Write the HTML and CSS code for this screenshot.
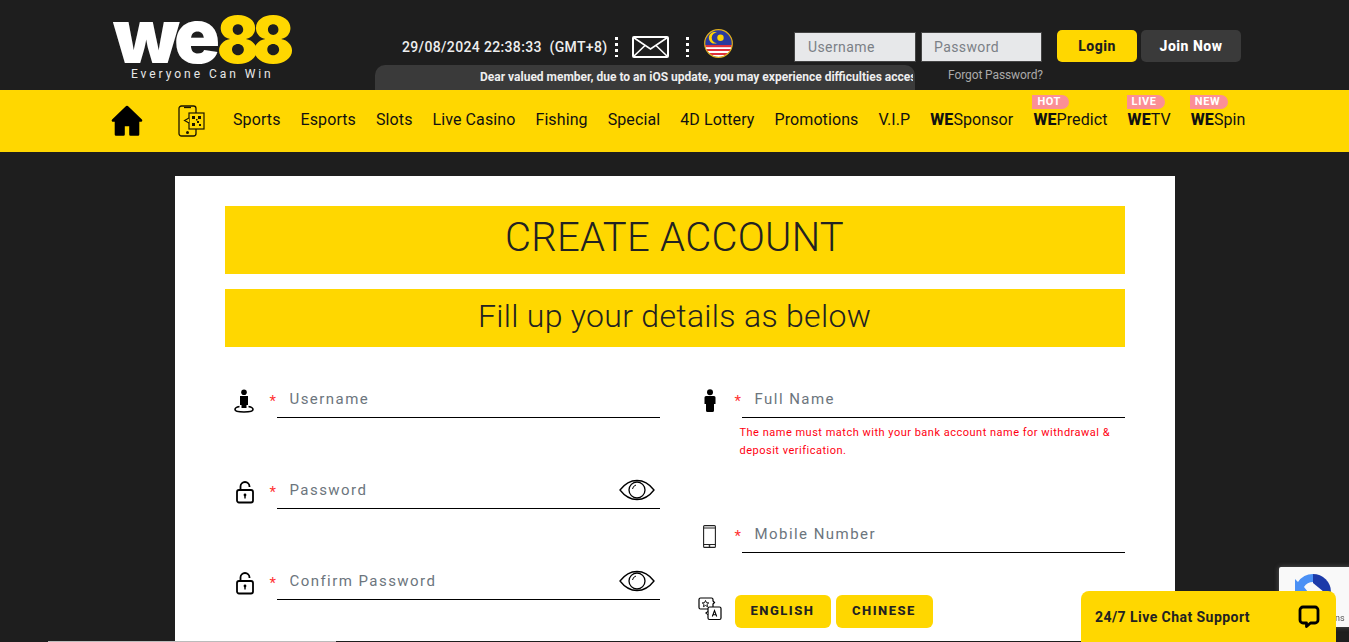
FILE: index.html
```html
<!DOCTYPE html>
<html lang="en">
<head>
<meta charset="utf-8">
<title>WE88 - Create Account</title>
<link rel="stylesheet" href="styles.css">
</head>
<body>
<div class="page">
  <header class="top">
    <a class="logo" href="#">
      <span class="logo-mark"><span class="logo-we">we</span><span class="logo-88">88</span></span>
      <span class="logo-tag">Everyone Can Win</span>
    </a>
    <div class="status">
      <span class="clock">29/08/2024 22:38:33&nbsp; (GMT+8)</span>
      <span class="dots"></span>
      <svg class="mail" viewBox="0 0 37 22" width="37" height="22"><rect x="1" y="1" width="35" height="20" rx="1" fill="none" stroke="#fff" stroke-width="2"/><path d="M1.5 1.5 18.5 13 35.5 1.5M1.5 20.5 13 9.5M35.5 20.5 24 9.5" fill="none" stroke="#fff" stroke-width="1.6"/></svg>
      <span class="dots dots-b"></span>
      <svg class="flag" viewBox="0 0 29 29" width="29" height="29"><defs><clipPath id="fc"><circle cx="14.5" cy="14.5" r="13.5"/></clipPath></defs><g clip-path="url(#fc)"><rect width="29" height="29" fill="#2a3a9e"/><rect y="16" width="29" height="13" fill="#fff"/><rect y="16" width="29" height="2.2" fill="#e0303a"/><rect y="20" width="29" height="2" fill="#e0303a"/><rect y="24" width="29" height="2" fill="#e0303a"/></g><circle cx="14.5" cy="14.5" r="13.8" fill="none" stroke="#e0b020" stroke-width="1.2"/><path d="M13 3.500a5.800 5.800 0 1 0 0 10.600a5 5 0 1 1 0-10.600z" fill="#ffd400"/><circle cx="16.500" cy="8.800" r="3.200" fill="#ffd400"/></svg>
    </div>
    <div class="auth">
      <input class="auth-input" type="text" placeholder="Username">
      <input class="auth-input auth-input-b" type="text" placeholder="Password">
      <button class="btn btn-login" type="button">Login</button>
      <button class="btn btn-join" type="button">Join Now</button>
    </div>
    <div class="notice"><span>Dear valued member, due to an iOS update, you may experience difficulties accessing our site</span></div>
    <a class="forgot" href="#">Forgot Password?</a>
  </header>

  <nav class="nav">
    <svg class="nav-home" viewBox="0 0 32 31" width="32" height="31"><path d="M16 2 2 15.500H5V29.500H12.500V20H19.500V29.500H27V15.500H30Z" fill="#000" stroke="#000" stroke-width="2.600" stroke-linejoin="round"/></svg>
    <svg class="nav-qr" viewBox="0 0 27 32" width="27" height="32"><rect x="1" y="1" width="17" height="30" rx="2.500" fill="none" stroke="#1a1400" stroke-width="1.300"/><path d="M6 2.500h7" stroke="#1a1400" stroke-width="1.300"/><circle cx="9.500" cy="27.500" r="1.500" fill="#1a1400"/><rect x="11" y="8" width="15" height="16" fill="#ffd700" stroke="#1a1400" stroke-width="1.200"/><path d="M11 13 6.500 15.500 11 18" fill="#ffd700" stroke="#1a1400" stroke-width="1.100"/><path d="M14 11h3v3h-3zM20 11h3v3h-3zM14 18h3v3h-3zM19 16h2v2h-2zM21 19h2v2h-2zM18 14h1.500v1.500h-1.500z" fill="#1a1400"/></svg>
    <ul class="nav-list">
      <li><a href="#">Sports</a></li>
      <li><a href="#">Esports</a></li>
      <li><a href="#">Slots</a></li>
      <li><a href="#">Live Casino</a></li>
      <li><a href="#">Fishing</a></li>
      <li><a href="#">Special</a></li>
      <li><a href="#">4D Lottery</a></li>
      <li><a href="#">Promotions</a></li>
      <li><a href="#">V.I.P</a></li>
      <li><a href="#"><b>WE</b>Sponsor</a></li>
      <li><a href="#"><b>WE</b>Predict</a><span class="tag">HOT</span></li>
      <li><a href="#"><b>WE</b>TV</a><span class="tag">LIVE</span></li>
      <li><a href="#"><b>WE</b>Spin</a><span class="tag">NEW</span></li>
    </ul>
  </nav>

  <main class="card">
    <h1 class="banner banner-lg">CREATE ACCOUNT</h1>
    <h2 class="banner banner-sm">Fill up your details as below</h2>
    <form class="form">
      <div class="col">
        <div class="field">
          <span class="f-icon"><svg viewBox="0 0 20 24" width="20" height="24"><circle cx="10" cy="3.200" r="2.800"/><path d="M6 7h8v9h-1.500v3h-5v-3H6z"/><path d="M5.500 17.500C2.500 18 1 19 1 20.500 1 22 5 23 10 23s9-1 9-2.500c0-1.500-1.500-2.500-4.500-3" fill="none" stroke="#000" stroke-width="1.600"/></svg></span>
          <span class="req">*</span>
          <span class="line"><input type="text" placeholder="Username"></span>
        </div>
        <div class="field">
          <span class="f-icon f-icon-lock"><svg viewBox="0 0 20 24" width="20" height="24"><path d="M5.500 10V6.500a4.500 4.500 0 0 1 9 0V7" fill="none" stroke="#000" stroke-width="1.800"/><rect x="2" y="10" width="16" height="12.500" rx="2" fill="none" stroke="#000" stroke-width="1.800"/><circle cx="10" cy="15" r="1.400"/><rect x="9.300" y="15" width="1.400" height="3.500"/></svg></span>
          <span class="req">*</span>
          <span class="line"><input type="password" placeholder="Password"><svg class="eye" viewBox="0 0 36 22" width="36" height="22"><path d="M1 11C6 4.500 12 1.500 18 1.500S30 4.500 35 11C30 17.500 24 20.500 18 20.500S6 17.500 1 11Z" fill="none" stroke="#000" stroke-width="1.300"/><circle cx="18" cy="11" r="8" fill="none" stroke="#000" stroke-width="1.300"/><path d="M13.500 10a5 5 0 0 1 3.500-4" fill="none" stroke="#000"/></svg></span>
        </div>
        <div class="field">
          <span class="f-icon f-icon-lock"><svg viewBox="0 0 20 24" width="20" height="24"><path d="M5.500 10V6.500a4.500 4.500 0 0 1 9 0V7" fill="none" stroke="#000" stroke-width="1.800"/><rect x="2" y="10" width="16" height="12.500" rx="2" fill="none" stroke="#000" stroke-width="1.800"/><circle cx="10" cy="15" r="1.400"/><rect x="9.300" y="15" width="1.400" height="3.500"/></svg></span>
          <span class="req">*</span>
          <span class="line"><input type="password" placeholder="Confirm Password"><svg class="eye" viewBox="0 0 36 22" width="36" height="22"><path d="M1 11C6 4.500 12 1.500 18 1.500S30 4.500 35 11C30 17.500 24 20.500 18 20.500S6 17.500 1 11Z" fill="none" stroke="#000" stroke-width="1.300"/><circle cx="18" cy="11" r="8" fill="none" stroke="#000" stroke-width="1.300"/><path d="M13.500 10a5 5 0 0 1 3.500-4" fill="none" stroke="#000"/></svg></span>
        </div>
      </div>
      <div class="col">
        <div class="field field-r">
          <span class="f-icon"><svg viewBox="0 0 12 24" width="12" height="24"><circle cx="6" cy="3.200" r="3"/><path d="M2 7h8a1.500 1.500 0 0 1 1.500 1.500V15H10v6.500a1.500 1.500 0 0 1-1.500 1.500h-5A1.500 1.500 0 0 1 2 21.500V15H.5V8.500A1.500 1.500 0 0 1 2 7z"/></svg></span>
          <span class="req">*</span>
          <span class="line"><input type="text" placeholder="Full Name"></span>
        </div>
        <p class="hint">The name must match with your bank account name for withdrawal &amp; deposit verification.</p>
        <div class="field field-r field-mobile">
          <span class="f-icon"><svg viewBox="0 0 13 23" width="13" height="23"><rect x=".6" y=".6" width="11.800" height="21.800" rx="1" fill="none" stroke="#222" stroke-width="1.100"/><path d="M.6 3h11.800M.6 19.500h11.800" stroke="#222" stroke-width="1"/><circle cx="6.500" cy="21" r=".9" fill="#222"/></svg></span>
          <span class="req">*</span>
          <span class="line"><input type="tel" placeholder="Mobile Number"></span>
        </div>
        <div class="lang">
          <svg class="lang-icon" viewBox="0 0 24 24" width="24" height="24"><path d="M2.500 1h11a1.500 1.500 0 0 1 1.500 1.500V4l1.500 1.500L15 7v5H9l-2 0H2.500A1.500 1.500 0 0 1 1 10.500v-8A1.500 1.500 0 0 1 2.500 1z" fill="#fff" stroke="#000" stroke-width="1.200"/><rect x="10" y="10" width="13" height="12.500" rx="1.500" fill="#fff" stroke="#000" stroke-width="1.200"/><path d="M10 14.500 8 16l2 1.500" fill="#fff" stroke="#000" stroke-width="1.200"/><path d="M7.500 3.500l1 2.200 2.300.2-1.800 1.500.6 2.300-2.100-1.200-2.100 1.200.6-2.300-1.800-1.500 2.300-.2z" fill="none" stroke="#000" stroke-width=".9"/><path d="M14.300 19.500 16.500 13.500 18.700 19.500M15 17.800h3" fill="none" stroke="#000" stroke-width="1.100"/></svg>
          <button class="lang-btn" type="button">ENGLISH</button>
          <button class="lang-btn lang-btn-b" type="button">CHINESE</button>
        </div>
      </div>
    </form>
  </main>

  <div class="edge"></div>

  <div class="recaptcha">
    <svg viewBox="0 0 38 38" width="38" height="38"><path d="M19 1A18 18 0 0 1 37 19H30L19 10Z" fill="#1c3aa9"/><path d="M19 1A18 18 0 0 0 4 9L1 6V19H14L10 14A11 11 0 0 1 19 9Z" fill="#4a90f5"/><path d="M1 19A18 18 0 0 0 19 37V28A9 9 0 0 1 10 19Z" fill="#b8b8b8"/></svg>
    <span class="recaptcha-txt">ns</span>
  </div>

  <button class="chat" type="button">
    <span>24/7 Live Chat Support</span>
    <svg viewBox="0 0 24 24" width="24" height="24"><path d="M6 3h12a3 3 0 0 1 3 3v10a3 3 0 0 1-3 3h-4.500L9.500 22.500V19H6a3 3 0 0 1-3-3V6a3 3 0 0 1 3-3z" fill="none" stroke="#000" stroke-width="2.800" stroke-linejoin="round"/></svg>
  </button>
</div>
</body>
</html>
```

FILE: styles.css
```css
* { box-sizing: border-box; }
html, body { margin: 0; padding: 0; height: 100%; overflow: hidden; }
body { background: #1e1e1e; font-family: Roboto, "Liberation Sans", sans-serif; color: #222; }
a { color: inherit; text-decoration: none; }
.page { height: 100vh; overflow: hidden; }

/* top bar */
.top { height: 90px; background: #1e1e1e; display: grid; grid-template-columns: 375px 419px 121px 1fr; grid-template-rows: 65px 25px; }
.logo { grid-column: 1; grid-row: 1 / 3; padding: 5px 0 0 113px; display: flex; flex-direction: column; }
.logo-mark { display: flex; align-items: baseline; height: 61px; line-height: 61px; font-family: Inter, sans-serif; font-weight: 900; }
.logo-we { color: #fff; font-size: 76px; letter-spacing: -5px; }
.logo-88 { color: #ffd700; font-size: 65px; letter-spacing: -7px; margin-left: 2px; transform: scaleX(.95); transform-origin: left bottom; }
.logo-tag { color: #e8e8e8; font-size: 12px; letter-spacing: 2.950px; line-height: 14px; margin: 1px 0 0 18px; font-weight: 400; white-space: nowrap; }

.status { grid-column: 2; grid-row: 1; display: flex; align-items: flex-start; padding: 29px 0 0 27px; color: #eee; }
.clock { font-size: 14px; font-weight: 500; line-height: 18px; margin-top: 9px; white-space: nowrap; width: 205px; letter-spacing: .35px; }
.dots { width: 3px; height: 20px; margin: 8px 0 0 8px; background: repeating-linear-gradient(to bottom, #fff 0 3px, transparent 3px 6px); flex: none; }
.dots-b { margin-left: 17px; }
.mail { margin: 7px 0 0 14px; flex: none; }
.flag { margin-left: 15px; flex: none; }

.auth { grid-column: 3 / 5; grid-row: 1; display: flex; align-items: flex-start; padding-top: 30px; }
.auth-input { width: 122px; height: 30px; margin-top: 2px; background: #e7e8ea; border: 1px solid #444; padding: 0 13px; font: 400 14px Roboto, sans-serif; letter-spacing: .4px; color: #333; outline: 0; }
.auth-input::placeholder { color: #7b8086; opacity: 1; }
.auth-input-b { width: 121px; margin-left: 5px; padding: 0 12px; }
.btn { height: 32px; border: 0; border-radius: 5px; font: 800 14px Roboto, sans-serif; letter-spacing: .5px; padding: 0; }
.btn-login { width: 80px; margin-left: 15px; background: #ffd700; color: #1e1e1e; }
.btn-join { width: 100px; margin-left: 4px; background: #3a3a3a; color: #fff; }

.notice { grid-column: 2 / 4; grid-row: 2; background: #3a3a3a; border-radius: 10px 10px 0 0; overflow: hidden; white-space: nowrap; padding: 4px 2px 0 105px; }
.notice span { display: block; overflow: hidden; color: #eee; font-size: 12px; font-weight: 700; line-height: 16px; }
.forgot { grid-column: 4; grid-row: 2; padding: 2px 0 0 33px; font-size: 12px; line-height: 16px; color: #aaa; letter-spacing: -.1px; white-space: nowrap; }

/* nav */
.nav { height: 62px; background: #ffd700; display: flex; align-items: flex-start; padding-left: 111px; position: relative; }
.nav-home { margin-top: 15px; flex: none; }
.nav-qr { margin: 15px 0 0 35px; flex: none; }
.nav-list { list-style: none; margin: 0 0 0 28px; padding: 0; display: flex; gap: 20px; }
.nav-list li { position: relative; padding-top: 20px; font-size: 16px; line-height: 20px; letter-spacing: .1px; color: #111; white-space: nowrap; }
.nav-list b { font-weight: 800; }
.tag { position: absolute; top: 5px; left: -1px; height: 14px; padding: 0 8px 0 5px; background: #fb8f96; border-radius: 0 7px 7px 0; color: #fff; font-size: 11px; font-weight: 700; line-height: 14px; letter-spacing: .6px; }

/* card */
.card { width: 1000px; margin: 24px auto 0; background: #fff; padding: 30px 50px 40px; }
.banner { margin: 0; background: #ffd700; color: #222; text-align: center; font-weight: 300; }
.banner-lg { height: 68px; font-size: 40px; line-height: 64px; letter-spacing: .3px; }
.banner-sm { height: 58px; margin-top: 15px; font-size: 32px; line-height: 54px; letter-spacing: .3px; }

.form { display: grid; grid-template-columns: 435px 435px; column-gap: 30px; margin-top: 33px; }
.col { display: flex; flex-direction: column; gap: 53px; }
.col:last-child { gap: 0; }
.field { display: flex; height: 38px; }
.f-icon { width: 45px; flex: none; padding: 9px 0 0 9px; }
.f-icon svg { display: block; }
.f-icon-lock { padding-left: 10px; }
.field-r .f-icon { padding-left: 14px; }
.field-mobile { margin-top: 55px; }
.field-mobile .f-icon { padding-left: 13px; padding-top: 10px; }
.req { width: 7px; flex: none; color: #f33; font-size: 15px; line-height: 15px; padding-top: 14px; }
.line { flex: 1; display: flex; align-items: flex-start; border-bottom: 1px solid #000; }
.line input { flex: 1; min-width: 0; height: 37px; border: 0; outline: 0; padding: 0 0 0 13px; background: transparent; font: 400 15px Roboto, sans-serif; letter-spacing: 1.450px; color: #333; }
.line input::placeholder { color: #6c757d; opacity: 1; }
.eye { flex: none; margin: 8px 5px 0 0; }
.hint { margin: 6px 0 0 50px; font-size: 11px; line-height: 18px; color: #f01; letter-spacing: .5px; height: 36px; }
.lang { display: flex; align-items: flex-start; margin-top: 42px; }
.lang-icon { margin: 2px 0 0 8px; flex: none; }
.lang-btn { height: 33px; width: 96px; margin-left: 13px; border: 0; border-radius: 6px; background: #ffd700; color: #222; font: 800 13px Roboto, sans-serif; letter-spacing: 1.500px; padding: 0 0 2px; }
.lang-btn-b { width: 97px; margin-left: 5px; }

/* overlays */
.edge { position: fixed; left: 0; right: 0; bottom: 0; height: 1px; background: linear-gradient(to right, #1e1e1e 0 48px, #bbb 48px 336px, #1e1e1e 336px); z-index: 3; }
.recaptcha { position: fixed; left: 1279px; top: 567px; width: 80px; height: 60px; background: #f9f9f9; box-shadow: 0 0 5px rgba(128,128,128,.6); border-radius: 2px; padding: 6px 0 0 15px; z-index: 4; }
.recaptcha svg { display: block; }
.recaptcha-txt { position: absolute; left: 56px; top: 45px; font-size: 9px; line-height: 12px; color: #555; }
.chat { position: fixed; left: 1081px; bottom: 0; width: 255px; height: 51px; background: #ffd700; border: 0; border-radius: 8px 8px 0 0; display: flex; justify-content: space-between; align-items: flex-start; padding: 0 15px 0 14px; font: 700 14px Roboto, sans-serif; letter-spacing: .45px; color: #222; z-index: 5; }
.chat span { margin-top: 17px; line-height: 18px; }
.chat svg { margin-top: 13px; }
```
